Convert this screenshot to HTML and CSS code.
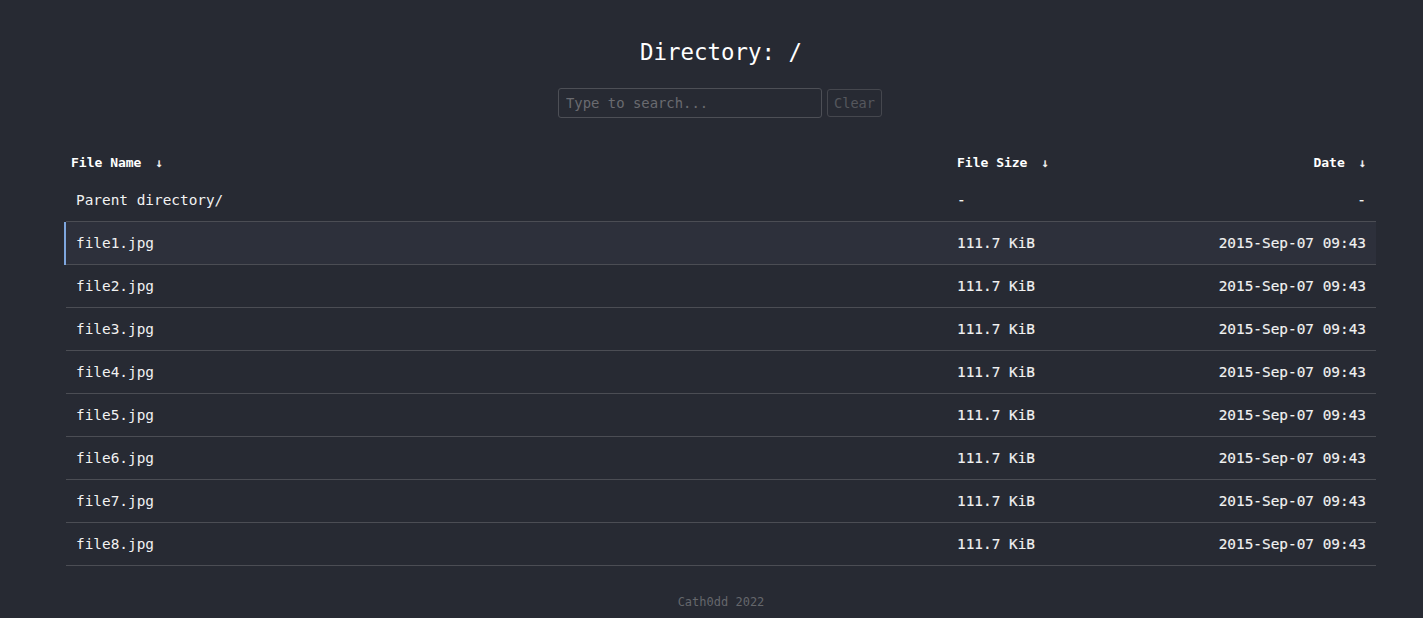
FILE: index.html
```html
<!DOCTYPE html>
<html lang="en">
<head>
<meta charset="utf-8">
<title>Directory: /</title>
<link rel="stylesheet" href="styles.css">
</head>
<body>
<div class="page">
  <h1 class="title">Directory: /</h1>
  <form class="search">
    <input class="search-input" type="text" placeholder="Type to search...">
    <button class="search-clear" type="button" disabled>Clear</button>
  </form>
  <div class="listing">
    <div class="row head">
      <div class="c-name">File Name<span class="arrow">↓</span></div>
      <div class="c-size">File Size<span class="arrow">↓</span></div>
      <div class="c-date">Date<span class="arrow">↓</span></div>
    </div>
    <div class="row item">
      <div class="c-name">Parent directory/</div>
      <div class="c-size">-</div>
      <div class="c-date">-</div>
    </div>
    <div class="row item active">
      <div class="c-name">file1.jpg</div>
      <div class="c-size">111.7 KiB</div>
      <div class="c-date">2015-Sep-07 09:43</div>
    </div>
    <div class="row item">
      <div class="c-name">file2.jpg</div>
      <div class="c-size">111.7 KiB</div>
      <div class="c-date">2015-Sep-07 09:43</div>
    </div>
    <div class="row item">
      <div class="c-name">file3.jpg</div>
      <div class="c-size">111.7 KiB</div>
      <div class="c-date">2015-Sep-07 09:43</div>
    </div>
    <div class="row item">
      <div class="c-name">file4.jpg</div>
      <div class="c-size">111.7 KiB</div>
      <div class="c-date">2015-Sep-07 09:43</div>
    </div>
    <div class="row item">
      <div class="c-name">file5.jpg</div>
      <div class="c-size">111.7 KiB</div>
      <div class="c-date">2015-Sep-07 09:43</div>
    </div>
    <div class="row item">
      <div class="c-name">file6.jpg</div>
      <div class="c-size">111.7 KiB</div>
      <div class="c-date">2015-Sep-07 09:43</div>
    </div>
    <div class="row item">
      <div class="c-name">file7.jpg</div>
      <div class="c-size">111.7 KiB</div>
      <div class="c-date">2015-Sep-07 09:43</div>
    </div>
    <div class="row item">
      <div class="c-name">file8.jpg</div>
      <div class="c-size">111.7 KiB</div>
      <div class="c-date">2015-Sep-07 09:43</div>
    </div>
  </div>
  <footer class="footer">Cath0dd 2022</footer>
</div>
</body>
</html>
```

FILE: styles.css
```css
html, body {
  margin: 0;
  padding: 0;
  background: #272a33;
  color: #f2f2f2;
  font-family: "DejaVu Sans Mono", "Liberation Mono", monospace;
}

.page {
  padding: 0 47px 0 66px;
}

.title {
  margin: 0;
  padding-top: 37px;
  font-size: 22.4px;
  line-height: 30px;
  font-weight: normal;
  text-align: center;
  color: #ffffff;
}

.search {
  margin-top: 21px;
  display: flex;
  justify-content: center;
  align-items: center;
  gap: 5px;
  padding-right: 2px;
}

.search-input {
  box-sizing: border-box;
  width: 264px;
  height: 30px;
  padding: 0 7px;
  background: transparent;
  border: 1px solid #4d4f56;
  border-radius: 3px;
  color: #ddd;
  font-family: inherit;
  font-size: 13.9px;
  outline: none;
}

.search-input::placeholder {
  color: #6a6b70;
}

.search-clear {
  box-sizing: border-box;
  width: 55px;
  height: 28px;
  padding: 0;
  background: transparent;
  border: 1px solid #45474e;
  border-radius: 3px;
  color: #55575d;
  font-family: inherit;
  font-size: 13.6px;
}

.listing {
  margin-top: 28px;
}

.row {
  display: grid;
  grid-template-columns: 886px 160px 1fr;
  align-items: center;
}

.head {
  height: 33px;
  font-size: 13px;
  font-weight: bold;
  color: #ffffff;
}

.head .c-name,
.head .c-size {
  padding-left: 5px;
}

.head .c-date {
  padding-right: 10px;
  text-align: right;
}

.arrow {
  display: inline-block;
  margin-left: 14px;
  font-size: 12px;
  font-weight: normal;
  -webkit-text-stroke: 0.3px currentColor;
}

.item {
  height: 42px;
  border-bottom: 1px solid #4b4d54;
  font-size: 14.4px;
}

.item .c-name {
  padding-left: 10px;
}

.item .c-size {
  padding-left: 5px;
  -webkit-text-stroke: 0.15px currentColor;
}

.item .c-date {
  padding-right: 10px;
  text-align: right;
  -webkit-text-stroke: 0.15px currentColor;
}

.item.active {
  background: #2d303b;
  box-shadow: -2px 0 0 #7ea6de;
}

.footer {
  margin-top: 28px;
  text-align: center;
  font-size: 12px;
  line-height: 16px;
  color: #65676c;
}
```
